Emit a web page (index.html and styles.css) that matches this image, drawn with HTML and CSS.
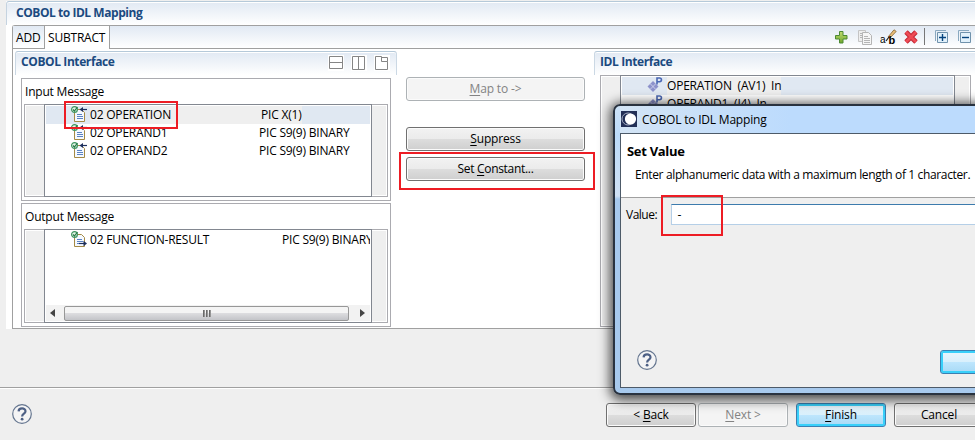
FILE: index.html
```html
<!DOCTYPE html>
<html lang="en">
<head>
  <meta charset="UTF-8" />
  <title>COBOL to IDL Mapping</title>
  <link rel="stylesheet" href="styles.css">
</head>
<body>
  <!-- shared icons -->
  <svg class="defs" width="0" height="0">
    <defs>
      <linearGradient id="green" x1="0" y1="0" x2="0" y2="1">
        <stop offset="0" stop-color="#c3dc72"/><stop offset="1" stop-color="#6fa62d"/>
      </linearGradient>
      <symbol id="doc" viewBox="0 0 16 16">
        <path d="M3.5 3.500h7l3 3v9h-10z" fill="#f5f9ff" stroke="#a58a45"/>
        <path d="M6 8.500h5M6 10.500h6M6 12.500h6" stroke="#5b83c4"/>
        <circle cx="3.500" cy="3.500" r="2.900" fill="#e3f3e6" stroke="#3f9560" stroke-width="1.200"/>
        <path d="M2 3.500l1.400 1.500L6.500 1" fill="none" stroke="#247a45" stroke-width="1.200"/>
      </symbol>
      <symbol id="in" viewBox="0 0 16 16">
        <use href="#doc" width="16" height="16"/>
        <path d="M10.500 3.500h5.500" stroke="#1d2f5c" stroke-width="1.200"/>
        <path d="M12 1v5L8.500 3.500z" fill="#1d2f5c"/>
      </symbol>
      <symbol id="out" viewBox="0 0 16 16">
        <use href="#doc" width="16" height="16"/>
        <path d="M8 12.500h5" stroke="#1d2f5c" stroke-width="1.200"/>
        <path d="M12.500 9.800v5.400l3.500-2.700z" fill="#1d2f5c"/>
      </symbol>
      <symbol id="param" viewBox="0 0 16 16">
        <path d="M6 4l5.500 5.500L6 15 .5 9.500z" fill="#8d92cb"/>
        <path d="M3.200 6.700l5.500 5.600M8.800 6.700l-5.600 5.600" stroke="#d8dcf0" stroke-width=".8"/>
        <path d="M10 7.500V1h2.600a1.700 1.700 0 0 1 0 3.700H10" fill="none" stroke="#4b68b4" stroke-width="1.600"/>
      </symbol>
      <symbol id="help" viewBox="0 0 20 20">
        <circle cx="10" cy="10" r="9.300" fill="#f4f4f5" stroke="#64758f" stroke-width="1.200"/>
        <path d="M6.600 7.400c.1-4 6.900-4 6.900-.2 0 2.400-3.400 2.400-3.400 5.200" fill="none" stroke="#4d6085" stroke-width="2.200"/>
        <circle cx="10.100" cy="15.200" r="1.400" fill="#4d6085"/>
      </symbol>
    </defs>
  </svg>

  <div class="wizard">
    <section class="panel">
      <h1 class="title">COBOL to IDL Mapping</h1>

      <div class="folder">
        <div class="tabs">
          <div class="tab">ADD</div>
          <div class="tab active">SUBTRACT</div>
          <div class="toolbar">
            <svg width="16" height="16"><path d="M6.500 2.500h3.500v4h4v3.500h-4v4H6.500v-4h-4V6.500h4z" fill="url(#green)" stroke="#4c8a33"/></svg>
            <svg width="16" height="16"><path d="M1.500 1.500h7v11h-7z" fill="#eee" stroke="#c4c4c4"/><path d="M5.500 3.500h6l3 3v9h-9z" fill="#f6f6f6" stroke="#b5b5b5"/><path d="M7 7.500h4M7 9.500h6M7 11.500h6M7 13.500h6M3 4.500h2M3 6.500h2M3 8.500h2" stroke="#b5b5b5"/></svg>
            <svg class="rename" width="18" height="18"><path d="M8 8L14 .8l2.200 1.600L10 9z" fill="#e8bd78" stroke="#80612e" stroke-width=".8"/><path d="M6 12l3-4" stroke="#222" stroke-width="1.200"/><text x="0" y="13.500" font-size="10">a</text><text x="8.500" y="15" font-size="11" font-weight="bold">b</text></svg>
            <svg width="16" height="16"><path d="M3 3l10 10M13 3L3 13" stroke="#c32936" stroke-width="4.800"/><path d="M3 3l10 10M13 3L3 13" stroke="#ee4b55" stroke-width="2.800"/></svg>
            <i class="sep"></i>
            <svg width="16" height="16"><path d="M1.500 12V1.500H12" fill="none" stroke="#8aa9c0"/><path d="M3.500 3.500h10v10h-10z" fill="#e2f1fb" stroke="#7092ac"/><path d="M5 8.500h7M8.500 5v7" stroke="#07447e" stroke-width="1.400"/></svg>
            <svg class="collapse" width="16" height="16"><path d="M1.500 12V1.500H12" fill="none" stroke="#8aa9c0"/><path d="M3.500 3.500h10v10h-10z" fill="#e2f1fb" stroke="#7092ac"/><path d="M5 8.500h7" stroke="#07447e" stroke-width="1.400"/></svg>
          </div>
        </div>

        <div class="columns">
          <section class="cobol">
            <h2 class="title">COBOL Interface
              <span class="views">
                <svg width="16" height="16"><path d="M1.500 1.500h13v12h-13z M1.500 7.500h13"/></svg>
                <svg width="16" height="16"><path d="M1.500 1.500h12v13h-12z M7.500 1.500v13"/></svg>
                <svg width="16" height="16"><path d="M1.500 1.500h6v5h6v8h-12z M7.500 2.500h6v4"/></svg>
              </span>
            </h2>
            <div class="group">
              <div class="caption">Input Message</div>
              <div class="frame">
                <div class="list">
                  <div class="row selected"><svg class="ico"><use href="#in"/></svg><div class="cells"><span class="name">02 OPERATION</span><span class="pic">PIC X(1)</span></div><i class="mark mark-row"></i></div>
                  <div class="row"><svg class="ico"><use href="#in"/></svg><div class="cells"><span class="name">02 OPERAND1</span><span class="pic">PIC S9(9) BINARY</span></div></div>
                  <div class="row"><svg class="ico"><use href="#in"/></svg><div class="cells"><span class="name">02 OPERAND2</span><span class="pic">PIC S9(9) BINARY</span></div></div>
                </div>
              </div>
            </div>
            <div class="group output">
              <div class="caption">Output Message</div>
              <div class="frame">
                <div class="list">
                  <div class="row"><svg class="ico"><use href="#out"/></svg><div class="cells"><span class="name">02 FUNCTION-RESULT</span><span class="pic">PIC S9(9) BINARY</span></div></div>
                  <div class="scroll">
                    <i class="arrow left"></i>
                    <div class="thumb"><i></i><i></i><i></i></div>
                    <i class="arrow right"></i>
                  </div>
                </div>
              </div>
            </div>
          </section>

          <div class="actions">
            <div class="btn disabled"><span><u>M</u>ap to -&gt;</span></div>
            <div class="btn suppress"><span><u>S</u>uppress</span></div>
            <div class="btn constant"><span>Set <u>C</u>onstant...</span><i class="mark mark-btn"></i></div>
          </div>

          <section class="idl">
            <h2 class="title">IDL Interface</h2>
            <div class="frame">
              <div class="list">
                <div class="row selected"><svg class="ico"><use href="#param"/></svg><div class="cells">OPERATION&nbsp; (AV1)&nbsp; In</div></div>
                <div class="row"><svg class="ico"><use href="#param"/></svg><div class="cells">OPERAND1&nbsp; (I4)&nbsp; In</div></div>
              </div>
            </div>
          </section>
        </div>
      </div>
    </section>

    <footer class="footer">
      <svg class="help"><use href="#help"/></svg>
      <div class="btn back"><span>&lt; <u>B</u>ack</span></div>
      <div class="btn disabled"><span><u>N</u>ext &gt;</span></div>
      <div class="btn default"><span><u>F</u>inish</span></div>
      <div class="btn"><span>Cancel</span></div>
    </footer>
  </div>

  <div class="dialog">
    <div class="dialog-title">
      <svg width="16" height="16"><path d="M0 0h16v16H0z" fill="#222f56"/><circle cx="7" cy="8" r="6" fill="none" stroke="#a6aec2"/><circle cx="9.500" cy="8" r="5.600" fill="#fff"/></svg>
      <span>COBOL to IDL Mapping</span>
    </div>
    <div class="dialog-body">
      <header>
        <h3>Set Value</h3>
        <p>Enter alphanumeric data with a maximum length of 1 character.</p>
      </header>
      <div class="field">
        <label>Value:</label>
        <div class="input">-<i class="mark mark-value"></i></div>
      </div>
      <div class="dialog-footer">
        <svg class="help"><use href="#help"/></svg>
        <div class="btn default"></div>
      </div>
    </div>
  </div>
</body>
</html>
```
FILE: styles.css
```css
* { margin: 0; padding: 0; box-sizing: border-box; }

body {
  width: 975px;
  height: 440px;
  overflow: hidden;
  position: relative;
  background: #efefef;
  color: #000;
  font: 12px/18px "Open Sans", "Noto Sans", sans-serif;
  letter-spacing: -0.2px;
  white-space: nowrap;
}

svg { display: block; flex: none; }
.defs { position: absolute; }

.wizard { width: 1000px; height: 440px; display: flex; flex-direction: column; }

.title {
  background: linear-gradient(#e1e9f3, #fff);
  border-top: 1px solid #b5c9d9;
  box-shadow: inset 0 1px #fff;
  color: #1b4a80;
  font-size: 12px;
  font-weight: bold;
  letter-spacing: -0.4px;
}

.panel {
  margin: 1px 0 0 6px;
  height: 328px;
  background: #fff;
  display: flex;
  flex-direction: column;
}
.panel > .title { height: 24px; padding-left: 9px; line-height: 21px; letter-spacing: -0.45px; border-left: 1px solid #c5d3e0; border-radius: 3px 0 0; }

.folder {
  margin-left: 6px;
  flex: 1;
  border: solid #a0a0a0;
  border-width: 1px 0 1px 1px;
  border-top-left-radius: 3px;
  display: flex;
  flex-direction: column;
}

.tabs {
  height: 23px;
  display: flex;
  background: linear-gradient(#e1e9f3, #fff);
  border-bottom: 1px solid #a0a0a0;
}
.tab { padding: 2px 3px 0 3px; width: 31px; line-height: 20px; }
.tab.active {
  width: 66px;
  height: 23px;
  background: #fff;
  border: solid #a0a0a0;
  border-width: 0 1px;
}
.toolbar { display: flex; margin-left: 723px; padding-top: 3px; gap: 8px; }
.toolbar .rename { margin: 0 -3px 0 -1px; font-family: "Liberation Sans", sans-serif; }
.sep { width: 1px; height: 17px; background: #777; margin: -1px 1px 0 -3px; }
.toolbar .collapse { margin-left: -1px; }

.columns { display: flex; flex: 1; padding-left: 2px; }

.cobol { width: 382px; padding-top: 2px; }
.cobol .title, .idl .title {
  display: flex;
  height: 24px;
  padding-left: 5px;
  line-height: 20px;
  border-left: 1px solid #cbd8e4;
  border-radius: 3px 3px 0 0;
}
.cobol .title { border-right: 1px solid #cbd8e4; }
.views { display: flex; gap: 7px; margin: 3px 6px 0 auto; }
.views svg { fill: #fff; stroke: #858585; background: #fff; }

.group { margin: 3px 0 0 6px; width: 370px; height: 123px; border: 1px solid #ababb0; padding: 3px 2px; }
.group.output { height: 124px; margin-top: 2px; }
.caption { height: 22px; line-height: 20px; padding-left: 1px; letter-spacing: -0.2px; }

.frame {
  height: 93px;
  background: #efefef;
  border: 1px solid #ababb0;
  padding: 0 15px 0 19px;
  box-shadow: inset 0 0 0 1px #fff;
}
.output .frame { height: 94px; }
.list {
  margin: -1px 0;
  height: calc(100% + 2px);
  background: #fff;
  border: 1px solid #828790;
  padding: 1px;
  display: flex;
  flex-direction: column;
}
.row { display: flex; height: 18px; padding-left: 25px; position: relative; overflow: hidden; }
.row.selected { background: #e0e8f2; overflow: visible; }
.ico { width: 16px; height: 16px; margin: 0 3px 0 0; }
.cells { display: flex; line-height: 18px; }
.name { width: 169px; }
.selected .cells { background: #efefef; }
.selected .name { width: 171px; }
.output .name { width: 192px; }

.scroll { display: flex; align-items: center; margin-top: auto; height: 16px; background: #f2f2f2; }
.arrow { width: 0; height: 8px; border: 4px solid transparent; }
.arrow.left { margin: 0 9px 0 0; border-right: 5px solid #444; }
.arrow.right { margin-left: 11px; border-left: 5px solid #444; }
.thumb {
  width: 285px;
  height: 15px;
  display: flex;
  justify-content: center;
  align-items: center;
  gap: 1px;
  border: 1px solid #979797;
  border-radius: 2px;
  background: linear-gradient(#f4f4f4 0 45%, #dcdcdf 50%, #c3c4c8);
}
.thumb i { width: 2px; height: 7px; background: linear-gradient(90deg, #555, #aaa); }

.actions { padding: 28px 9px 0; width: 197px; }
.btn {
  height: 24px;
  display: flex;
  justify-content: center;
  position: relative;
  border: 1px solid #707070;
  border-radius: 3px;
  background: linear-gradient(#f2f2f2, #ebebeb 49%, #dddddd 50%, #cfcfcf);
  box-shadow: inset 0 0 0 1px #fbfbfb;
  line-height: 22px;
  letter-spacing: -0.15px;
}
.btn u { text-underline-offset: 2px; }
.btn.disabled { background: #f4f4f4; border-color: #adb2b5; color: #838383; }
.btn.default {
  border-color: #3c7fb1;
  background: linear-gradient(#eaf6fd, #d9f0fc 49%, #bee6fd 50%, #a7d9f5);
  box-shadow: inset 0 0 0 2px #39d0fa;
}
.suppress { margin-top: 26px; }
.constant { margin-top: 6px; letter-spacing: -0.3px; }

.idl { width: 390px; padding-top: 2px; }
.idl .frame { margin: 0 0 0 6px; width: 371px; height: 252px; }
.idl .ico { margin-right: 4px; }

.footer {
  margin-top: 58px;
  border-top: 1px solid #a0a0a0;
  box-shadow: inset 0 1px #fff;
  flex: 1;
  display: flex;
  padding: 16px 0 0 12px;
}
.footer .btn { width: 90px; margin: -1px 8px 0 0; }
.footer .btn.back { margin: -1px 2px 0 574px; }
.help { width: 20px; height: 20px; }

/* highlight rectangles */
.mark { position: absolute; border: 2px solid #ed1c24; z-index: 2; }
.mark-row { left: 18px; top: -5px; width: 114px; height: 28px; }
.mark-btn { left: -8px; top: -6px; width: 196px; height: 38px; }
.mark-value { left: -11px; top: -10px; width: 62px; height: 41px; }

.dialog {
  position: absolute;
  left: 613px;
  top: 104px;
  width: 400px;
  height: 291px;
  padding: 0 0 7px 5px;
  border: 2px solid #29323f;
  border-radius: 7px;
  background: linear-gradient(#cde2f6 0, #bcdbfa 30px, #d0e1f4 90px, #a7c9ed 93px, #a7c9ed);
  box-shadow: 0 2px 12px 3px rgba(0, 0, 0, .7);
}
.dialog-title {
  height: 27px;
  display: flex;
  padding: 5px 0 0 1px;
  gap: 5px;
  background: linear-gradient(90deg, #d3e4f5, #bcdbfd 170px);
}
.dialog-title span { line-height: 17px; }
.dialog-body { height: 255px; background: #efefef; border: 1px solid #4d5a68; display: flex; flex-direction: column; }
.dialog header { height: 64px; background: #fff; border-bottom: 1px solid #a0a0a0; padding: 8px 0 0 6px; }
h3 { font-size: 13px; line-height: 18px; letter-spacing: -0.3px; }
.dialog p { padding: 6px 0 0 8px; letter-spacing: -0.36px; }
.field { display: flex; padding: 6px 0 0 5px; line-height: 21px; }
.field label { width: 46px; letter-spacing: -0.5px; }
.input {
  position: relative;
  width: 350px;
  height: 21px;
  padding-left: 6px;
  line-height: 19px;
  background: #fff;
  border: 1px solid #b5cfe7;
  border-top-color: #3d7bad;
}
.dialog-footer { display: flex; margin-top: 125px; padding-left: 16px; }
.dialog-footer .btn { width: 91px; margin-left: 283px; }
```
